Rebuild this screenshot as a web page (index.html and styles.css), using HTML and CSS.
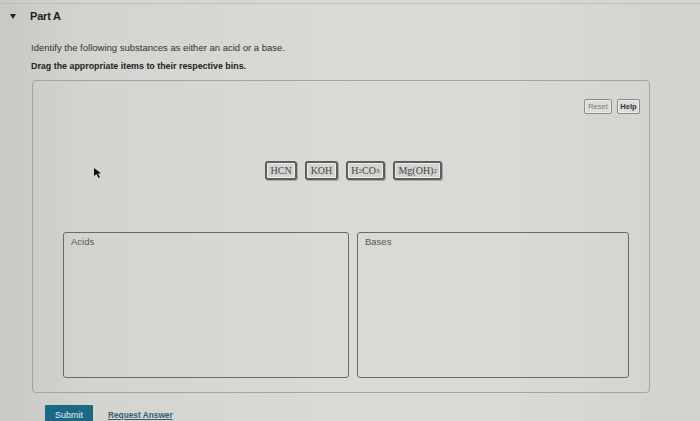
FILE: index.html
```html
<!DOCTYPE html>
<html>
<head>
<meta charset="utf-8">
<link rel="stylesheet" href="styles.css">
</head>
<body>
<div class="page">
  <div class="topline"></div>
  <div class="part-head">
    <span class="caret"></span>
    <span class="part-title">Part A</span>
  </div>
  <div class="content">
    <p class="intro">Identify the following substances as either an acid or a base.</p>
    <p class="instr">Drag the appropriate items to their respective bins.</p>
    <div class="dnd">
      <div class="tools">
        <button class="tbtn reset">Reset</button>
        <button class="tbtn help">Help</button>
      </div>
      <div class="tiles">
        <span class="tile">HCN</span>
        <span class="tile">KOH</span>
        <span class="tile">H<sub>2</sub>CO<sub>3</sub></span>
        <span class="tile">Mg(OH)<sub>2</sub></span>
      </div>
      <div class="bins">
        <div class="bin"><span class="bin-label">Acids</span></div>
        <div class="bin"><span class="bin-label">Bases</span></div>
      </div>
      <svg class="cursor" width="10" height="12" viewBox="0 0 10 12"><path d="M1 1 L1 9 L3.5 7 L5.5 11 L7 10.3 L5 6.5 L8 6.3 Z" fill="#111"/></svg>
    </div>
    <div class="actions">
      <button class="submit">Submit</button>
      <a class="request" href="#">Request Answer</a>
    </div>
  </div>
</div>
</body>
</html>
```

FILE: styles.css
```css
html, body {
  margin: 0;
  padding: 0;
}
body {
  width: 700px;
  height: 421px;
  overflow: hidden;
  font-family: "Liberation Sans", Arial, sans-serif;
  background: linear-gradient(90deg, #c8c8c4 0%, #d3d3cf 12%, #d9d9d5 45%, #dadad6 70%, #d2d2ce 100%);
}
.page {
  position: relative;
  height: 421px;
}
.topline {
  height: 3px;
  border-bottom: 1px solid #bdbdb9;
}
.part-head {
  display: flex;
  align-items: center;
  height: 24px;
  padding-left: 10px;
}
.caret {
  width: 0;
  height: 0;
  border-left: 3.5px solid transparent;
  border-right: 3.5px solid transparent;
  border-top: 5px solid #222;
  margin-right: 14px;
}
.part-title {
  font-size: 11px;
  font-weight: bold;
  color: #222;
  letter-spacing: -0.2px;
}
.content {
  padding-left: 31px;
}
.intro {
  margin: 14px 0 0;
  font-size: 9.5px;
  line-height: 11px;
  color: #333;
}
.instr {
  margin: 8px 0 0;
  font-size: 8.9px;
  line-height: 11px;
  font-weight: bold;
  color: #222;
}
.dnd {
  position: relative;
  margin-top: 8px;
  margin-left: 1px;
  width: 618px;
  height: 313px;
  border: 1px solid #a3a3a0;
  border-radius: 4px;
  box-sizing: border-box;
}
.tools {
  display: flex;
  justify-content: flex-end;
  gap: 5px;
  padding: 18px 9px 0 0;
}
.tbtn {
  font-family: "Liberation Sans", Arial, sans-serif;
  font-size: 7.5px;
  height: 15px;
  padding: 0 2px;
  border: 1px solid #8a8a88;
  border-radius: 2px;
  background: #dcdcd8;
  box-shadow: inset 0 0 0 1px #ececea;
}
.reset { color: #7e7e7e; width: 28px; }
.help { color: #333; font-weight: bold; width: 23px; }
.tiles {
  display: flex;
  gap: 8px;
  padding: 47px 0 0 232px;
}
.tile {
  display: inline-flex;
  align-items: center;
  height: 19px;
  box-sizing: border-box;
  padding: 0 3.5px;
  font-family: "Liberation Serif", "Times New Roman", serif;
  font-size: 10px;
  color: #444;
  background: #d4d4d0;
  border: 2px solid #5e5e5c;
  border-radius: 3px;
  box-shadow: inset 0 0 0 1px #ededeb, 1px 1px 0 #a9a9a6;
}
.tile sub {
  font-size: 7px;
  vertical-align: -2px;
  line-height: 0;
}
.bins {
  display: grid;
  grid-template-columns: 286px 272px;
  gap: 8px;
  padding: 52px 0 0 30px;
}
.bin {
  height: 146px;
  box-sizing: border-box;
  border: 1px solid #6a6a68;
  border-radius: 3px;
  padding: 3px 7px;
  font-size: 9.5px;
  line-height: 11px;
}
.bin-label {
  color: #555;
}
.cursor {
  position: absolute;
  left: 60px;
  top: 86px;
}
.actions {
  display: flex;
  align-items: flex-start;
  gap: 15px;
  margin-top: 12px;
  padding-left: 14px;
}
.submit {
  width: 48px;
  height: 18px;
  border: 0;
  border-radius: 1px;
  background: #1b6884;
  color: #e6eef2;
  font-family: "Liberation Sans", Arial, sans-serif;
  font-size: 9px;
  padding: 2px 0 0;
}
.request {
  font-size: 8.3px;
  font-weight: bold;
  color: #2f5d7a;
  text-decoration: underline;
  margin-top: 5px;
}
```
